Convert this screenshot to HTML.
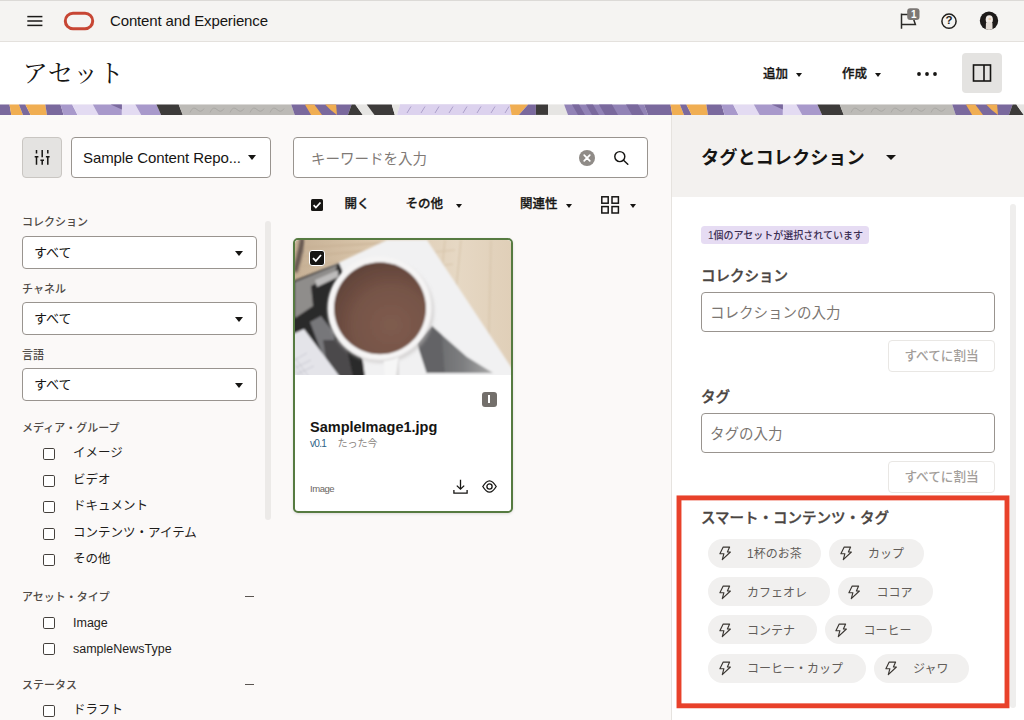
<!DOCTYPE html>
<html lang="ja">
<head>
<meta charset="utf-8">
<title>アセット</title>
<style>
*{box-sizing:border-box;margin:0;padding:0}
html,body{width:1024px;height:720px;overflow:hidden}
body{position:relative;background:#fbf9f8;font-family:"Liberation Sans","Noto Sans CJK JP",sans-serif;color:#161513;font-size:13px}
.abs{position:absolute}
.t{position:absolute;white-space:nowrap;line-height:1}
/* top bar */
#topline{left:0;top:0;width:1024px;height:1px;background:#dcdad7}
#topbar{left:0;top:1px;width:1024px;height:41px;background:#f5f4f2;border-bottom:1px solid #e4e1dd}
#titlebar{left:0;top:42px;width:1024px;height:62px;background:#fff}
#strip{left:0;top:104px;width:1024px;height:11px}
#pagetitle{left:22.5px;top:60.8px;font-family:"Liberation Serif","Noto Serif CJK SC",serif;font-size:25.4px;color:#161513}
/* left */
.sel{position:absolute;background:#fff;border:1px solid #99948f;border-radius:4px}
.lbl{position:absolute;white-space:nowrap;line-height:1;font-size:11px;font-weight:500;color:#4f4a46;margin-top:1.5px}
.cb{position:absolute;width:12px;height:12px;border:1.4px solid #45413d;border-radius:1.8px;background:#fff;margin-top:0.5px}
.cbl{position:absolute;white-space:nowrap;line-height:1;font-size:12.5px;color:#1f1d1b;margin-top:1px}
.caret{position:absolute;width:0;height:0;border-left:4.4px solid transparent;border-right:4.4px solid transparent;border-top:5.2px solid #161513;margin-left:-0.4px}
.tb{font-size:12.5px;font-weight:500;-webkit-text-stroke:0.3px #161513;color:#161513;margin-top:0.3px}
.caret.sm{border-left-width:3.6px;border-right-width:3.6px;border-top-width:4px;margin-left:0.4px;margin-top:0.4px}
/* right */
#rpanel{left:671px;top:115px;width:353px;height:605px;background:#fff;border-left:1px solid #e6e3df}
#rhead{left:671px;top:115px;width:353px;height:82px;background:#f3f1ef;border-left:1px solid #e6e3df}
.inp{position:absolute;background:#fff;border:1px solid #99948f;border-radius:4px}
.btn{position:absolute;background:#fff;border:1px solid #e9e7e4;border-radius:4px;color:#a39e9a;font-size:12.6px;font-weight:500;text-align:center;line-height:31px;white-space:nowrap}
.h3{position:absolute;white-space:nowrap;line-height:1;font-size:14.5px;font-weight:500;-webkit-text-stroke:0.35px #4a4542;color:#4a4542;margin-top:1px}
.chip{position:absolute;height:29px;border-radius:14.5px;background:#f1f0ef}
.chip span{position:absolute;top:9.5px;white-space:nowrap;line-height:1;font-size:12px;color:#625d59}
.chip svg{position:absolute;left:10.5px;top:7.6px}
</style>
</head>
<body>
<div class="abs" id="topbar"></div>
<div class="abs" id="topline"></div>
<div class="abs" id="titlebar"></div>
<!--STRIP--><svg class="abs" style="left:0;top:104px" width="1024" height="11" viewBox="0 0 1024 11">
<polygon points="-17.0,0.5 9.5,0.5 11.3,10.9 -13.0,10.9" fill="#7a699d"/>
<polygon points="9.5,0.5 18.9,0.5 23.0,10.9 11.3,10.9" fill="#f0ae52"/>
<polygon points="18.9,0.5 25.4,0.5 30.6,10.9 23.0,10.9" fill="#7a699d"/>
<polygon points="25.4,0.5 45.3,0.5 47.0,10.9 30.6,10.9" fill="#f0ae52"/>
<polygon points="45.3,0.5 60.5,0.5 63.5,10.9 47.0,10.9" fill="#7a699d"/>
<polygon points="60.5,0.5 72.2,0.5 77.5,10.9 63.5,10.9" fill="#a899cb"/>
<polygon points="72.2,0.5 92.8,0.5 98.6,10.9 77.5,10.9" fill="#e3dbf2"/>
<polygon points="92.8,0.5 121.9,0.5 121.9,10.9 98.6,10.9" fill="#a899cb"/>
<polygon points="121.9,0.5 135.3,0.5 141.2,10.9 121.9,10.9" fill="#e3dbf2"/>
<polygon points="135.3,0.5 156.4,0.5 161.1,10.9 141.2,10.9" fill="#a899cb"/>
<polygon points="156.4,0.5 178.7,0.5 182.8,10.9 161.1,10.9" fill="#3d3b3a"/>
<polygon points="178.7,0.5 291.2,0.5 294.7,10.9 182.8,10.9" fill="#bcbab6"/>
<polygon points="291.2,0.5 351.6,0.5 347.9,10.9 294.7,10.9" fill="#7a699d"/>
<polygon points="304.9,0.5 314.3,0.5 322.0,10.9 311.1,10.9" fill="#f0ae52"/>
<polygon points="351.6,0.5 355.3,0.5 362.8,10.9 347.9,10.9" fill="#3d3b3a"/>
<polygon points="355.3,0.5 366.7,0.5 374.5,10.9 362.8,10.9" fill="#e6e5e3"/>
<polygon points="366.7,0.5 391.7,0.5 394.8,10.9 374.5,10.9" fill="#3d3b3a"/>
<polygon points="391.7,0.5 400.0,0.5 397.0,10.9 394.8,10.9" fill="#e6e5e3"/>
<polygon points="400.0,0.5 510.0,0.5 511.7,10.9 397.0,10.9" fill="#dcd2ee"/>
<polygon points="400.0,0.5 509.8,0.5 511.7,10.9 400.0,10.9" fill="#dcd2ee"/>
<polygon points="509.8,0.5 528.1,0.5 518.8,10.9 511.7,10.9" fill="#f0ae52"/>
<polygon points="528.1,0.5 535.9,0.5 535.9,10.9 518.8,10.9" fill="#7a699d"/>
<polygon points="535.9,0.5 548.0,0.5 548.0,10.9 535.9,10.9" fill="#3d3b3a"/>
<polygon points="548.0,0.5 564.1,0.5 568.0,10.9 548.0,10.9" fill="#e6e5e3"/>
<polygon points="564.1,0.5 644.0,0.5 648.0,10.9 568.0,10.9" fill="#9283b6"/>
<polygon points="572.0,0.5 579.0,0.5 585.0,10.9 578.0,10.9" fill="#7a699d"/>
<polygon points="586.0,0.5 593.0,0.5 599.0,10.9 592.0,10.9" fill="#7a699d"/>
<polygon points="599.0,0.5 612.0,0.5 618.0,10.9 605.0,10.9" fill="#7a699d"/>
<polygon points="626.0,0.5 638.0,0.5 644.0,10.9 632.0,10.9" fill="#7a699d"/>
<polygon points="644.0,0.5 670.5,0.5 672.3,10.9 648.0,10.9" fill="#7a699d"/>
<polygon points="670.5,0.5 679.9,0.5 684.0,10.9 672.3,10.9" fill="#f0ae52"/>
<polygon points="679.9,0.5 686.4,0.5 691.6,10.9 684.0,10.9" fill="#7a699d"/>
<polygon points="686.4,0.5 706.3,0.5 708.0,10.9 691.6,10.9" fill="#f0ae52"/>
<polygon points="706.3,0.5 721.5,0.5 724.5,10.9 708.0,10.9" fill="#7a699d"/>
<polygon points="721.5,0.5 733.2,0.5 738.5,10.9 724.5,10.9" fill="#a899cb"/>
<polygon points="733.2,0.5 753.8,0.5 759.6,10.9 738.5,10.9" fill="#e3dbf2"/>
<polygon points="753.8,0.5 782.9,0.5 782.9,10.9 759.6,10.9" fill="#a899cb"/>
<polygon points="782.9,0.5 796.3,0.5 802.2,10.9 782.9,10.9" fill="#e3dbf2"/>
<polygon points="796.3,0.5 817.4,0.5 822.1,10.9 802.2,10.9" fill="#a899cb"/>
<polygon points="817.4,0.5 839.7,0.5 843.8,10.9 822.1,10.9" fill="#3d3b3a"/>
<polygon points="839.7,0.5 952.2,0.5 955.7,10.9 843.8,10.9" fill="#bcbab6"/>
<polygon points="952.2,0.5 1012.6,0.5 1008.9,10.9 955.7,10.9" fill="#7a699d"/>
<polygon points="965.9,0.5 975.3,0.5 983.0,10.9 972.1,10.9" fill="#f0ae52"/>
<polygon points="1012.6,0.5 1016.3,0.5 1023.8,10.9 1008.9,10.9" fill="#3d3b3a"/>
<polygon points="1016.3,0.5 1027.7,0.5 1035.5,10.9 1023.8,10.9" fill="#e6e5e3"/>
<path d="M325.2 0.5 L336.1 0.5 L337.0 10.9 Q331.0 7 325.2 0.5 Z" fill="#f0ae52"/>
<polygon points="110.7,0.5 121.9,0.5 121.9,5.5" fill="#7a699d"/>
<path d="M190.0 8.5 q3 -7 7 -3 t7 -1" fill="none" stroke="#a5a3a0" stroke-width="0.8"/>
<path d="M210.0 8.5 q3 -7 7 -3 t7 -1" fill="none" stroke="#a5a3a0" stroke-width="0.8"/>
<path d="M230.0 8.5 q3 -7 7 -3 t7 -1" fill="none" stroke="#a5a3a0" stroke-width="0.8"/>
<path d="M250.0 8.5 q3 -7 7 -3 t7 -1" fill="none" stroke="#a5a3a0" stroke-width="0.8"/>
<path d="M270.0 8.5 q3 -7 7 -3 t7 -1" fill="none" stroke="#a5a3a0" stroke-width="0.8"/>
<line x1="411.0" y1="2.5" x2="407.0" y2="9" stroke="#a093c0" stroke-width="0.8"/>
<line x1="425.0" y1="2.5" x2="421.0" y2="9" stroke="#a093c0" stroke-width="0.8"/>
<line x1="439.0" y1="2.5" x2="435.0" y2="9" stroke="#a093c0" stroke-width="0.8"/>
<line x1="453.0" y1="2.5" x2="449.0" y2="9" stroke="#a093c0" stroke-width="0.8"/>
<line x1="467.0" y1="2.5" x2="463.0" y2="9" stroke="#a093c0" stroke-width="0.8"/>
<line x1="481.0" y1="2.5" x2="477.0" y2="9" stroke="#a093c0" stroke-width="0.8"/>
<line x1="495.0" y1="2.5" x2="491.0" y2="9" stroke="#a093c0" stroke-width="0.8"/>
<line x1="509.0" y1="2.5" x2="505.0" y2="9" stroke="#a093c0" stroke-width="0.8"/>
<path d="M986.2 0.5 L997.1 0.5 L998.0 10.9 Q992.0 7 986.2 0.5 Z" fill="#f0ae52"/>
<polygon points="771.7,0.5 782.9,0.5 782.9,5.5" fill="#7a699d"/>
<path d="M851.0 8.5 q3 -7 7 -3 t7 -1" fill="none" stroke="#a5a3a0" stroke-width="0.8"/>
<path d="M871.0 8.5 q3 -7 7 -3 t7 -1" fill="none" stroke="#a5a3a0" stroke-width="0.8"/>
<path d="M891.0 8.5 q3 -7 7 -3 t7 -1" fill="none" stroke="#a5a3a0" stroke-width="0.8"/>
<path d="M911.0 8.5 q3 -7 7 -3 t7 -1" fill="none" stroke="#a5a3a0" stroke-width="0.8"/>
<path d="M931.0 8.5 q3 -7 7 -3 t7 -1" fill="none" stroke="#a5a3a0" stroke-width="0.8"/>
</svg><!--/STRIP-->
<div class="t" id="pagetitle">アセット</div>

<!-- top bar items -->
<svg class="abs" style="left:26px;top:14px" width="18" height="14" viewBox="0 0 18 14"><g stroke="#1b1a18" stroke-width="1.5" stroke-linecap="butt"><line x1="1.3" y1="2.6" x2="16.4" y2="2.6"/><line x1="1.3" y1="7" x2="16.4" y2="7"/><line x1="1.3" y1="11.4" x2="16.4" y2="11.4"/></g></svg>
<svg class="abs" style="left:62px;top:10px" width="34" height="22" viewBox="0 0 34 22"><rect x="3.3" y="3.3" width="27.4" height="15.4" rx="7.7" ry="7.7" fill="none" stroke="#c74634" stroke-width="3"/></svg>
<div class="t" id="apptitle" style="left:110px;top:13px;font-size:15px;letter-spacing:-0.14px;color:#161513">Content and Experience</div>
<!-- flag -->
<svg class="abs" style="left:896px;top:6px" width="28" height="26" viewBox="0 0 28 26"><path d="M5.5 7.4V22.8M5.5 8.4H16L19.4 18.6H5.5" fill="none" stroke="#2b2a28" stroke-width="1.5" stroke-linejoin="miter"/><rect x="11.2" y="2.2" width="12.3" height="11.8" rx="3" fill="#7b7774"/></svg>
<div class="t" style="left:911px;top:9.5px;font-size:10px;font-weight:bold;color:#fff">1</div>
<!-- help -->
<svg class="abs" style="left:940px;top:12px" width="18" height="18" viewBox="0 0 18 18"><circle cx="9" cy="9.2" r="7.1" fill="none" stroke="#1f1e1c" stroke-width="1.5"/></svg>
<div class="t" style="left:945.6px;top:15.3px;font-size:11.5px;font-weight:bold;color:#1f1e1c">?</div>
<!-- avatar -->
<svg class="abs" style="left:979px;top:11px" width="20" height="20" viewBox="0 0 20 20"><defs><clipPath id="avc"><circle cx="10" cy="9.8" r="9.2"/></clipPath><filter id="avb"><feGaussianBlur stdDeviation="0.5"/></filter></defs><g clip-path="url(#avc)"><rect width="20" height="20" fill="#1d1a19"/><g filter="url(#avb)"><ellipse cx="10.3" cy="8.6" rx="3.6" ry="4.4" fill="#f1ebe6"/><path d="M6.6 20 L7 12 Q10 9 13.4 12 L13.6 20 Z" fill="#e4dcd6"/><ellipse cx="10.8" cy="8" rx="1.4" ry="1.2" fill="#e8cdb0"/></g></g></svg>
<!-- title bar actions -->
<div class="t tb" style="left:763px;top:67.7px">追加</div>
<div class="caret sm" style="left:796px;top:72.4px"></div>
<div class="t tb" style="left:842px;top:67.7px">作成</div>
<div class="caret sm" style="left:875px;top:72.4px"></div>
<svg class="abs" style="left:916px;top:70.6px" width="22" height="6" viewBox="0 0 22 6"><circle cx="3" cy="3" r="1.9" fill="#161513"/><circle cx="11" cy="3" r="1.9" fill="#161513"/><circle cx="19" cy="3" r="1.9" fill="#161513"/></svg>
<div class="abs" style="left:962px;top:53px;width:40px;height:40px;background:#e4e3e1;border-radius:4px"></div>
<svg class="abs" style="left:972px;top:63px" width="20" height="20" viewBox="0 0 20 20"><rect x="1.5" y="2" width="17" height="16" fill="none" stroke="#161513" stroke-width="1.6"/><line x1="12" y1="2" x2="12" y2="18" stroke="#161513" stroke-width="1.6"/></svg>

<!-- left panel -->
<div class="abs" style="left:22px;top:137px;width:40px;height:41px;background:#e4e3e1;border:1px solid #c9c6c2;border-radius:4px"></div>
<svg class="abs" style="left:32px;top:147px" width="20" height="20" viewBox="32 147 20 20"><g stroke="#161513" stroke-width="1.5" fill="none"><path d="M36.5 150V153.4M36.5 156.6V164.7M42.2 150V157.2M42.2 160V164.7M47.8 150V153.4M47.8 156.6V164.7"/><path d="M34.7 156.8H38.4M40.4 160.2H44M45.9 156.8H49.6" stroke-width="1.6"/></g></svg>
<div class="sel" style="left:71px;top:137px;width:200px;height:41px"></div>
<div class="t" style="left:83px;top:150px;font-size:15px;letter-spacing:-0.1px;color:#161513">Sample Content Repo...</div>
<div class="caret" style="left:248.6px;top:155px;border-left-width:4.5px;border-right-width:4.5px;border-top-width:5.5px"></div>

<div class="lbl" style="left:22px;top:215px">コレクション</div>
<div class="sel" style="left:22px;top:236px;width:235px;height:33px"></div>
<div class="t" style="left:34px;top:246px;font-size:13px">すべて</div>
<div class="caret" style="left:235.5px;top:251px"></div>
<div class="lbl" style="left:22px;top:282px">チャネル</div>
<div class="sel" style="left:22px;top:302px;width:235px;height:33px"></div>
<div class="t" style="left:34px;top:312px;font-size:13px">すべて</div>
<div class="caret" style="left:235.5px;top:317px"></div>
<div class="lbl" style="left:22px;top:348px">言語</div>
<div class="sel" style="left:22px;top:368px;width:235px;height:33px"></div>
<div class="t" style="left:34px;top:378px;font-size:13px">すべて</div>
<div class="caret" style="left:235.5px;top:383px"></div>
<div class="abs" style="left:264.5px;top:221px;width:6.5px;height:299px;background:#eceae8;border-radius:3.2px"></div>

<div class="lbl" style="left:22px;top:421px">メディア・グループ</div>
<div class="cb" style="left:43px;top:447px"></div><div class="cbl" style="left:73px;top:446px">イメージ</div>
<div class="cb" style="left:43px;top:474px"></div><div class="cbl" style="left:73px;top:473px">ビデオ</div>
<div class="cb" style="left:43px;top:500px"></div><div class="cbl" style="left:73px;top:499px">ドキュメント</div>
<div class="cb" style="left:43px;top:527px"></div><div class="cbl" style="left:73px;top:526px">コンテンツ・アイテム</div>
<div class="cb" style="left:43px;top:553px"></div><div class="cbl" style="left:73px;top:552px">その他</div>
<div class="lbl" style="left:22px;top:590px">アセット・タイプ</div>
<div class="abs" style="left:245px;top:595px;width:9px;height:1.2px;background:#5a5551;margin-top:0.6px"></div>
<div class="cb" style="left:43px;top:616px"></div><div class="cbl" style="left:73px;top:616px">Image</div>
<div class="cb" style="left:43px;top:642px"></div><div class="cbl" style="left:73px;top:642px">sampleNewsType</div>
<div class="lbl" style="left:22px;top:678px">ステータス</div>
<div class="abs" style="left:245px;top:683px;width:9px;height:1.2px;background:#5a5551;margin-top:0.6px"></div>
<div class="cb" style="left:43px;top:704px"></div><div class="cbl" style="left:73px;top:703px">ドラフト</div>

<!-- center -->
<div class="sel" style="left:293px;top:137px;width:355px;height:40.6px"></div>
<div class="t" style="left:311px;top:151.6px;font-size:14.5px;color:#7f7a76">キーワードを入力</div>
<svg class="abs" style="left:579px;top:149.5px" width="16" height="16" viewBox="0 0 16 16"><circle cx="8" cy="8" r="8" fill="#8f8b87"/><path d="M5.2 5.2L10.8 10.8M10.8 5.2L5.2 10.8" stroke="#fff" stroke-width="1.7" stroke-linecap="round"/></svg>
<svg class="abs" style="left:612px;top:149px" width="18" height="18" viewBox="0 0 18 18"><circle cx="7.8" cy="7.6" r="5" fill="none" stroke="#161513" stroke-width="1.45"/><path d="M11.5 11.3L15.8 15.2" stroke="#161513" stroke-width="1.5" stroke-linecap="round"/></svg>
<!-- toolbar -->
<svg class="abs" style="left:311px;top:199px" width="12" height="12" viewBox="0 0 12 12"><rect width="12" height="12" rx="1.5" fill="#161513"/><path d="M2.6 6.2L4.9 8.6L9.5 3.5" fill="none" stroke="#fff" stroke-width="1.7"/></svg>
<div class="t tb" style="left:344.6px;top:198px">開く</div>
<div class="t tb" style="left:405.6px;top:198px">その他</div>
<div class="caret sm" style="left:455.5px;top:204px"></div>
<div class="t tb" style="left:520px;top:198px">関連性</div>
<div class="caret sm" style="left:566px;top:204px"></div>
<svg class="abs" style="left:601px;top:196px" width="19" height="18" viewBox="0 0 19 18"><g fill="none" stroke="#161513" stroke-width="1.5"><rect x="0.8" y="0.8" width="6.4" height="6.4"/><rect x="11" y="0.8" width="6.4" height="6.4"/><rect x="0.8" y="10.6" width="6.4" height="6.4"/><rect x="11" y="10.6" width="6.4" height="6.4"/></g></svg>
<div class="caret sm" style="left:629.5px;top:204px"></div>
<!-- card -->
<div class="abs" id="card" style="left:293px;top:238px;width:220px;height:275px;background:#fff;border:2px solid #567b41;border-radius:5px;box-shadow:0 1px 3px rgba(0,0,0,.12)"></div>
<!--IMG--><svg class="abs" id="cardimg" style="left:295px;top:240px;border-radius:4px 4px 0 0" width="216" height="135" viewBox="0 0 216 135">
<defs>
<filter id="b1" x="-10%" y="-10%" width="120%" height="120%"><feGaussianBlur stdDeviation="0.9"/></filter>
<filter id="b2" x="-10%" y="-10%" width="120%" height="120%"><feGaussianBlur stdDeviation="1.6"/></filter>
<radialGradient id="cof" cx="0.62" cy="0.68" r="0.8"><stop offset="0" stop-color="#7f5c4f"/><stop offset="0.5" stop-color="#765447"/><stop offset="1" stop-color="#5a3e35"/></radialGradient>
<linearGradient id="wd" x1="0" y1="0" x2="1" y2="0"><stop offset="0" stop-color="#c6b095"/><stop offset="0.35" stop-color="#dac6ab"/><stop offset="0.75" stop-color="#e6d8c4"/><stop offset="1" stop-color="#e0cfb8"/></linearGradient>
<linearGradient id="ph2" x1="0" y1="0" x2="1" y2="0"><stop offset="0" stop-color="#5e5f61"/><stop offset="0.6" stop-color="#7d7e80"/><stop offset="1" stop-color="#a9a9a9"/></linearGradient>
<clipPath id="ic"><rect width="216" height="135"/></clipPath>
</defs>
<g clip-path="url(#ic)">
<rect width="216" height="135" fill="url(#wd)"/>
<g filter="url(#b1)">
<!-- wood grain -->
<path d="M0 8L90 3M0 17L70 11M0 27L45 22" stroke="#c4ad90" stroke-width="1"/>
<path d="M150 0L146 40M166 0L160 60L172 135M196 0L193 135M140 12L160 10M143 26L158 24" stroke="#d6c4aa" stroke-width="1.2" fill="none"/>
<path d="M8 -2Q5 14 0 32" stroke="#5e514b" stroke-width="5" fill="none" filter="url(#b1)"/>
<!-- white paper -->
<polygon points="92,0 132,0 218,130 218,137 -2,137 -2,42 43,23" fill="#f1f1f2"/>
<!-- magazine dark photo -->
<polygon points="-2,41 44,23 60,60 70,137 -2,137" fill="#2c2929"/>
<polygon points="0,42 42,25 40,34 16,46 18,66 0,78" fill="#8f8d8b"/>
<polygon points="20,40 43,30 43,37 22,47" fill="#bdbcbb"/>
<polygon points="15,82 26,76 38,92 44,120 30,122" fill="#77777a"/>
<polygon points="28,100 50,100 58,137 34,137" fill="#4b4a4b"/>
<!-- laptop / keyboard -->
<polygon points="-2,94 9,89 45,137 -2,137" fill="#e4e4e9"/>
<path d="M0 118L14 137M0 124L9 137M0 130L5 137M-2 121L12 113M0 128L16 120M2 134L19 126" stroke="#b9b9c2" stroke-width="0.6" fill="none"/>
<!-- right photo -->
<polygon points="122,103 137,86 147,95 172,117 198,133 198,137 133,137" fill="url(#ph2)"/>
<polygon points="122,103 137,86 147,95 150,137 133,137" fill="#636466"/>
<rect x="112" y="133" width="104" height="4" fill="#f1f1f2"/>
</g>
<!-- cup -->
<g filter="url(#b1)">
<ellipse cx="86" cy="71" rx="53" ry="52" fill="#bfbcbb" opacity="0.55" filter="url(#b2)"/>
<path d="M88 112 L104 112 L104 137 L90 137 Z" fill="#f6f6f6"/>
<path d="M104 114 L104 137 L101 137 Z" fill="#d9d8d8"/>
<circle cx="84.5" cy="68.2" r="52" fill="#f5f4f4"/>
<path d="M40 95 A52 52 0 0 0 125 100 A50 50 0 0 1 40 95Z" fill="#dddbdb"/>
<circle cx="85" cy="68.3" r="46" fill="url(#cof)"/>
</g>
</g>
</svg><!--/IMG-->
<svg class="abs" style="left:309px;top:249.5px" width="16" height="16" viewBox="0 0 16 16"><rect x="0.5" y="0.5" width="15" height="15" rx="2.5" fill="#161513" stroke="#fff" stroke-width="1"/><path d="M4 8.2L6.8 11L12 5" fill="none" stroke="#fff" stroke-width="1.8"/></svg>
<div class="abs" style="left:482px;top:392px;width:14.5px;height:14.5px;background:#736f6b;border-radius:3px"></div>
<div class="abs" style="left:487.7px;top:395.3px;width:2.6px;height:8px;background:#fff"></div>
<div class="t" style="left:310px;top:419.5px;font-size:14.5px;font-weight:bold;color:#161513">SampleImage1.jpg</div>
<div class="t" style="left:310px;top:438.5px;font-size:10px;letter-spacing:-0.7px;color:#2d5f86">v0.1</div>
<div class="t" style="left:337.5px;top:438.5px;font-size:10px;color:#8a8581">たった今</div>
<div class="t" style="left:310px;top:484px;font-size:9.5px;letter-spacing:-0.45px;color:#6a6561">Image</div>
<svg class="abs" style="left:452px;top:478px" width="17" height="17" viewBox="0 0 17 17"><g fill="none" stroke="#161513" stroke-width="1.3"><path d="M8.5 1.8V11M4.8 7.6L8.5 11.2L12.2 7.6"/><path d="M1.9 12V15.2H15.1V12"/></g></svg>
<svg class="abs" style="left:481.5px;top:480.2px" width="15" height="13" viewBox="0 0 15 13"><g fill="none" stroke="#161513" stroke-width="1.3"><path d="M0.8 6.5C3.4 2.2 5.4 0.8 7.5 0.8S11.6 2.2 14.2 6.5C11.6 10.8 9.6 12.2 7.5 12.2S3.4 10.8 0.8 6.5Z"/><circle cx="7.5" cy="6.5" r="2.6"/></g></svg>

<!-- right panel -->
<div class="abs" id="rpanel"></div>
<div class="abs" id="rhead"></div>
<div class="t" style="left:701px;top:149px;font-size:18.2px;font-weight:bold;color:#161513">タグとコレクション</div>
<div class="caret" style="left:886px;top:155px;border-left-width:5px;border-right-width:5px;border-top-width:5.5px"></div>
<div class="abs" style="left:1010px;top:204px;width:6px;height:504px;background:#efeeed;border-radius:3px"></div>
<div class="abs" style="left:701px;top:226.4px;width:168px;height:18px;background:#e6dcf3;border-radius:3.5px"></div>
<div class="t" style="left:708px;top:230.5px;font-size:10px;font-weight:500;color:#3a2d52">1個のアセットが選択されています</div>
<div class="h3" style="left:701px;top:268px">コレクション</div>
<div class="inp" style="left:701px;top:292px;width:294px;height:40px"></div>
<div class="t" style="left:710px;top:306.4px;font-size:14.5px;color:#7b7672">コレクションの入力</div>
<div class="btn" style="left:888px;top:340px;width:107px;height:32px">すべてに割当</div>
<div class="h3" style="left:701px;top:389px">タグ</div>
<div class="inp" style="left:701px;top:413px;width:294px;height:40px"></div>
<div class="t" style="left:710px;top:427.4px;font-size:14.5px;color:#7b7672">タグの入力</div>
<div class="btn" style="left:888px;top:461px;width:107px;height:32px">すべてに割当</div>
<div class="h3" style="left:701px;top:510px">スマート・コンテンツ・タグ</div>
<div class="chip" style="left:708px;top:538.6px;width:113px"><svg width="13" height="15" viewBox="0 0 13 15"><path d="M4.2 1.1H10.6L8.4 6H11.4L3.3 13.6L4.9 7.7H0.9Z" fill="none" stroke="#3a3632" stroke-width="1.15" stroke-linejoin="round"/></svg><span style="left:39px">1杯のお茶</span></div>
<div class="chip" style="left:829px;top:538.6px;width:95px"><svg width="13" height="15" viewBox="0 0 13 15"><path d="M4.2 1.1H10.6L8.4 6H11.4L3.3 13.6L4.9 7.7H0.9Z" fill="none" stroke="#3a3632" stroke-width="1.15" stroke-linejoin="round"/></svg><span style="left:39px">カップ</span></div>
<div class="chip" style="left:708px;top:577px;width:121.5px"><svg width="13" height="15" viewBox="0 0 13 15"><path d="M4.2 1.1H10.6L8.4 6H11.4L3.3 13.6L4.9 7.7H0.9Z" fill="none" stroke="#3a3632" stroke-width="1.15" stroke-linejoin="round"/></svg><span style="left:39px">カフェオレ</span></div>
<div class="chip" style="left:837.5px;top:577px;width:95px"><svg width="13" height="15" viewBox="0 0 13 15"><path d="M4.2 1.1H10.6L8.4 6H11.4L3.3 13.6L4.9 7.7H0.9Z" fill="none" stroke="#3a3632" stroke-width="1.15" stroke-linejoin="round"/></svg><span style="left:39px">ココア</span></div>
<div class="chip" style="left:708px;top:615.4px;width:108.5px"><svg width="13" height="15" viewBox="0 0 13 15"><path d="M4.2 1.1H10.6L8.4 6H11.4L3.3 13.6L4.9 7.7H0.9Z" fill="none" stroke="#3a3632" stroke-width="1.15" stroke-linejoin="round"/></svg><span style="left:39px">コンテナ</span></div>
<div class="chip" style="left:824.5px;top:615.4px;width:107px"><svg width="13" height="15" viewBox="0 0 13 15"><path d="M4.2 1.1H10.6L8.4 6H11.4L3.3 13.6L4.9 7.7H0.9Z" fill="none" stroke="#3a3632" stroke-width="1.15" stroke-linejoin="round"/></svg><span style="left:39px">コーヒー</span></div>
<div class="chip" style="left:708px;top:653.8px;width:157.5px"><svg width="13" height="15" viewBox="0 0 13 15"><path d="M4.2 1.1H10.6L8.4 6H11.4L3.3 13.6L4.9 7.7H0.9Z" fill="none" stroke="#3a3632" stroke-width="1.15" stroke-linejoin="round"/></svg><span style="left:39px">コーヒー・カップ</span></div>
<div class="chip" style="left:874px;top:653.8px;width:95px"><svg width="13" height="15" viewBox="0 0 13 15"><path d="M4.2 1.1H10.6L8.4 6H11.4L3.3 13.6L4.9 7.7H0.9Z" fill="none" stroke="#3a3632" stroke-width="1.15" stroke-linejoin="round"/></svg><span style="left:39px">ジャワ</span></div>

<svg class="abs" id="redbox" style="left:670px;top:490px" width="354" height="230" viewBox="670 490 354 230"><rect x="679" y="497.9" width="328" height="207.9" fill="none" stroke="#e8412a" stroke-width="4.9"/></svg>
</body>
</html>
